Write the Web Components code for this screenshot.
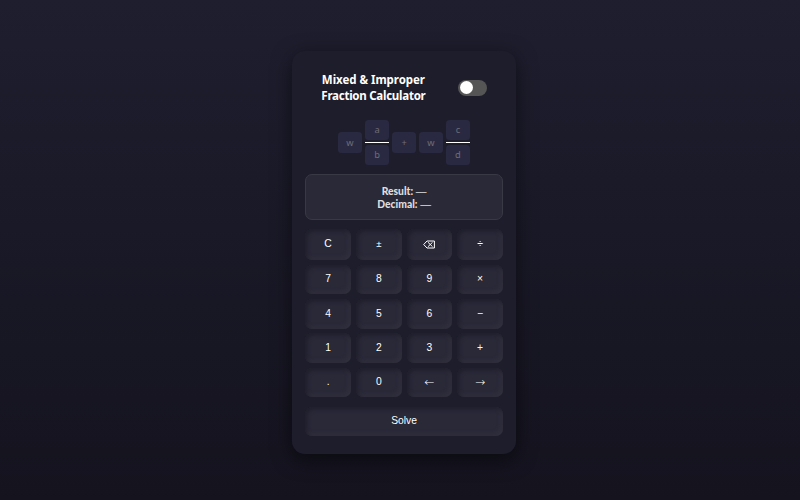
<!DOCTYPE html>
<html lang="en"><head><meta charset="utf-8"><title>Mixed &amp; Improper Fraction Calculator</title>
<style>
html{height:100%;background:#14131e}
body{margin:0;height:500px;overflow:hidden;background:linear-gradient(#1e1e2f,#14131e);font-family:"Noto Sans","Open Sans",sans-serif;color:#fff}
</style></head><body>
<fraction-calculator></fraction-calculator>
<script>
const define=(name,html)=>customElements.define(name,class extends HTMLElement{
  constructor(){super();this.attachShadow({mode:'open'}).innerHTML=html;}
});
define('toggle-switch',`<style>
:host{display:flex;box-sizing:border-box;width:28.5px;height:16px;border-radius:8px;background:#555;padding:1.5px;align-items:center}
i{display:block;width:13px;height:13px;border-radius:50%;background:#fff}
</style><i></i>`);
define('value-box',`<style>
:host{display:flex;box-sizing:border-box;width:23.5px;height:20.5px;border-radius:3.5px;background:#2a2942;color:#6d6d75;align-items:center;justify-content:center;font:9.3px/12px "Noto Sans",sans-serif}
</style><slot></slot>`);
define('fraction-stack',`<style>
:host{display:flex;flex-direction:column;width:24px;align-items:center}
hr{width:24px;height:1.3px;border:0;margin:1.5px 0 1.3px;background:#fff}
</style><slot name="top"></slot><hr><slot name="bottom"></slot>`);
define('result-panel',`<style>
:host{display:flex;flex-direction:column;box-sizing:border-box;height:46px;padding-top:1.5px;border:1px solid #393845;border-radius:7px;background:#2a2937;align-items:center;justify-content:center;font:10.3px/13px Lato,"Noto Sans",sans-serif;color:#ddd}
</style><slot></slot>`);
define('calc-key',`<style>
:host{display:block;min-width:0}
button{display:flex;align-items:center;justify-content:center;box-sizing:border-box;width:100%;height:100%;border:0;margin:0;padding:0 0 .6px;border-radius:7px;background:#2a2938;color:#fff;font:10.3px/12px "Liberation Sans",Arial,sans-serif;box-shadow:inset 2px 2px 4px #1f1e2c,inset -2px -2px 4px #33323f}
:host(.op) button{font-size:9.6px}
:host(.arrow) button{font:200 12px/12px "DejaVu Sans",sans-serif}
</style><button><slot></slot></button>`);
define('fraction-calculator',`<style>
:host{display:flex;justify-content:center;padding:51px 0 0 8.2px}
main{box-sizing:border-box;width:224.5px;height:403px;border-radius:13px;background:#1e1d2b;box-shadow:0 5px 20px rgba(0,0,0,.5);padding:22px 13.5px 0 13.5px}
header{display:flex;align-items:center;height:29px;padding:0 16px;justify-content:space-between}
h1{margin:0;font:bold 11.5px/15.5px "Noto Sans",sans-serif;text-align:center;letter-spacing:-.04px}
h1 span{letter-spacing:-.25px}
.inputs{display:flex;justify-content:center;align-items:center;gap:3.3px;height:45px;margin-top:18px}
result-panel{margin-top:9px}
b{font-weight:900}
em{font:10.8px/10px "Liberation Sans",sans-serif}
.keys{display:grid;grid-template-columns:repeat(4,1fr);grid-template-rows:31px 29.5px 29.5px 29.5px 29.5px;gap:4.8px 5.2px;margin-top:9px}
.solve{height:29.5px;margin-top:9.6px}
svg{display:block;width:12px;height:9px}
</style><main><header><h1>Mixed &amp; Improper<br><span>Fraction Calculator</span></h1><toggle-switch></toggle-switch></header>
<section class="inputs"><value-box>w</value-box><fraction-stack><value-box slot="top">a</value-box><value-box slot="bottom">b</value-box></fraction-stack><value-box>+</value-box><value-box>w</value-box><fraction-stack><value-box slot="top">c</value-box><value-box slot="bottom">d</value-box></fraction-stack></section>
<result-panel><div><b>Result:</b> <em>—</em></div><div><b>Decimal:</b> <em>—</em></div></result-panel>
<section class="keys">
<calc-key>C</calc-key><calc-key class="op">±</calc-key><calc-key><svg viewBox="0 0 12 9" fill="none" stroke="#fff"><path d="M4 1H11.4V8H4L.7 4.5ZM5 2.3l4.5 4.4M9.5 2.3L5 6.7"/></svg></calc-key><calc-key>÷</calc-key>
<calc-key>7</calc-key><calc-key>8</calc-key><calc-key>9</calc-key><calc-key>×</calc-key>
<calc-key>4</calc-key><calc-key>5</calc-key><calc-key>6</calc-key><calc-key>−</calc-key>
<calc-key>1</calc-key><calc-key>2</calc-key><calc-key>3</calc-key><calc-key>+</calc-key>
<calc-key>.</calc-key><calc-key>0</calc-key><calc-key class="arrow">←</calc-key><calc-key class="arrow">→</calc-key>
</section><calc-key class="solve">Solve</calc-key></main>`);
</script></body></html>
